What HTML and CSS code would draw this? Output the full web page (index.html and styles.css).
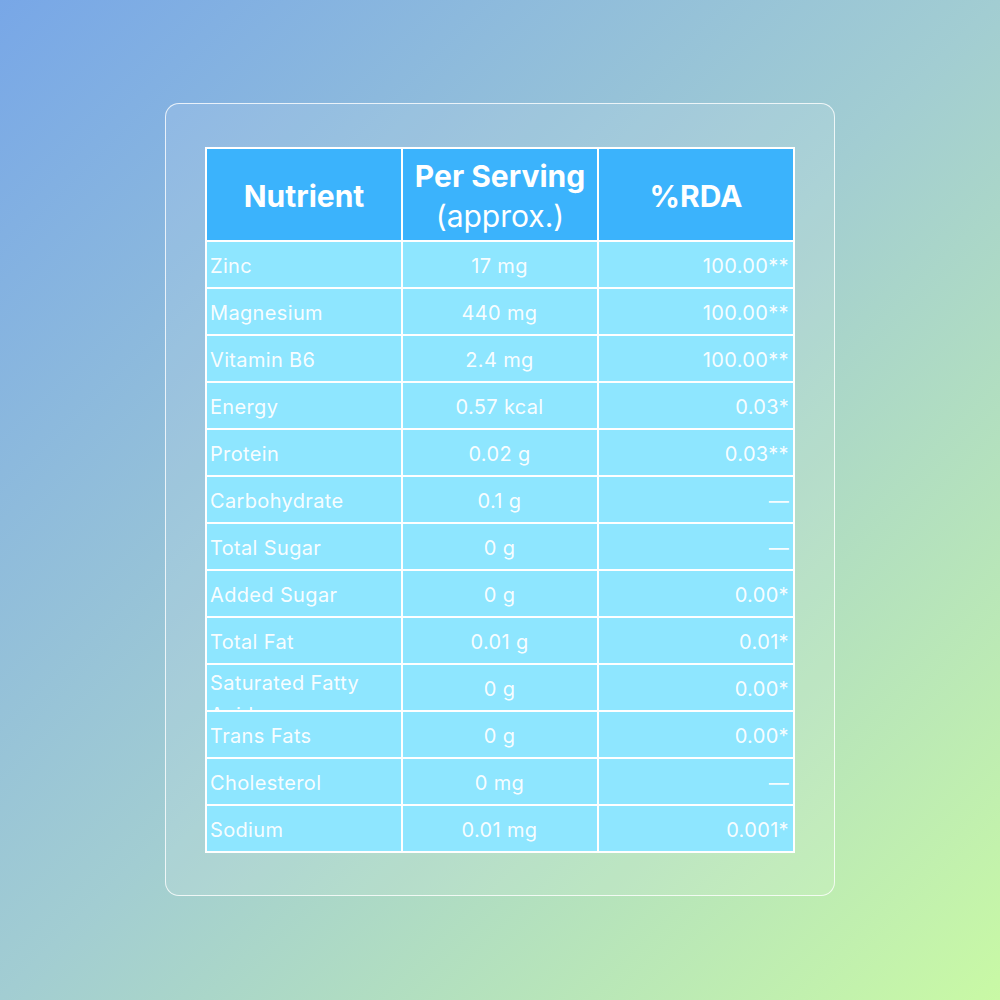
FILE: index.html
```html
<!DOCTYPE html>
<html lang="en">
<head>
<meta charset="utf-8">
<title>Nutrition Table</title>
<link rel="stylesheet" href="styles.css">
</head>
<body>
<div class="card">
  <div class="table">
    <div class="th">Nutrient</div>
    <div class="th">Per Serving<br><span class="light">(approx.)</span></div>
    <div class="th">%RDA</div>

    <div class="td name">Zinc</div><div class="td mid">17 mg</div><div class="td end">100.00**</div>
    <div class="td name">Magnesium</div><div class="td mid">440 mg</div><div class="td end">100.00**</div>
    <div class="td name">Vitamin B6</div><div class="td mid">2.4 mg</div><div class="td end">100.00**</div>
    <div class="td name">Energy</div><div class="td mid">0.57 kcal</div><div class="td end">0.03*</div>
    <div class="td name">Protein</div><div class="td mid">0.02 g</div><div class="td end">0.03**</div>
    <div class="td name">Carbohydrate</div><div class="td mid">0.1 g</div><div class="td end">—</div>
    <div class="td name">Total Sugar</div><div class="td mid">0 g</div><div class="td end">—</div>
    <div class="td name">Added Sugar</div><div class="td mid">0 g</div><div class="td end">0.00*</div>
    <div class="td name">Total Fat</div><div class="td mid">0.01 g</div><div class="td end">0.01*</div>
    <div class="td name">Saturated Fatty Acids</div><div class="td mid">0 g</div><div class="td end">0.00*</div>
    <div class="td name">Trans Fats</div><div class="td mid">0 g</div><div class="td end">0.00*</div>
    <div class="td name">Cholesterol</div><div class="td mid">0 mg</div><div class="td end">—</div>
    <div class="td name">Sodium</div><div class="td mid">0.01 mg</div><div class="td end">0.001*</div>
  </div>
</div>
</body>
</html>
```
FILE: styles.css
```css
* { box-sizing: border-box; }
html, body { margin: 0; padding: 0; }
body {
  width: 1000px;
  height: 1000px;
  padding-top: 103px;
  font-family: Inter, "Noto Sans", sans-serif;
  background: linear-gradient(135deg, #78a7e7 0%, #a2cdd2 50%, #c9f9a5 100%);
}
.card {
  width: 670px;
  height: 793px;
  margin: 0 auto;
  border: 1px solid rgba(255,255,255,0.8);
  border-radius: 14px;
  background: rgba(255,255,255,0.1);
  padding: 43px 39px 42px 39px;
}
.table {
  display: grid;
  grid-template-columns: 1fr 1fr 1fr;
  grid-template-rows: 91px repeat(13, 45px);
  gap: 2px;
  padding: 2px;
  background: #ffffff;
  width: 590px;
}
.th {
  background: #3bb3fc;
  color: #fff;
  font-weight: 700;
  font-size: 30px;
  line-height: 40px;
  padding-top: 3px;
  display: flex;
  flex-direction: column;
  justify-content: center;
  text-align: center;
}
.th .light { font-weight: 400; }
.td {
  background: #8ee6ff;
  color: rgba(255,255,255,0.96);
  font-size: 20px;
  letter-spacing: 0.35px;
  line-height: 32px;
  padding: 2px 4px 0 3px;
  overflow: hidden;
  display: flex;
  flex-direction: column;
  justify-content: safe center;
}
.td.mid { text-align: center; }
.td.end { text-align: right; }
```
